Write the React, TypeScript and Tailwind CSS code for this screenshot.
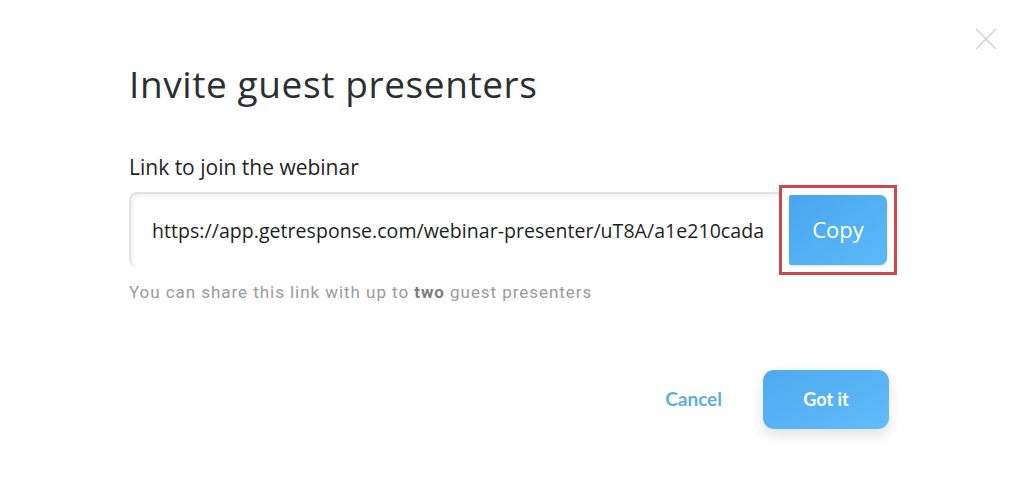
export default function App() {
  return (
    <div className="relative w-[1024px] h-[481px] bg-white overflow-hidden font-['Open_Sans',sans-serif]">
      <button className="absolute right-[26px] top-[27px] w-[24px] h-[24px] text-[#d4d4d4]">
        <svg viewBox="0 0 24 24" width="24" height="24" fill="none" stroke="currentColor" strokeWidth="1.6">
          <path d="M2 2 L22 22 M22 2 L2 22" />
        </svg>
      </button>

      <div className="pl-[129px] pt-[58px]">
        <h1 className="text-[37px] leading-[52px] text-[#2b2f33] tracking-[0.6px]">
          Invite guest presenters
        </h1>

        <div className="mt-[43px] text-[21px] leading-[28px] text-[#1f2326]">
          Link to join the webinar
        </div>

        <div className="mt-[11px] flex items-center w-[768px]">
          <div className="flex-1 h-[75px] flex items-center pl-[21px] rounded-l-[8px] border-t-2 border-l-2 border-[#e3e3e3] shadow-[inset_2px_2px_3px_rgba(0,0,0,0.06)] overflow-hidden">
            <span className="whitespace-nowrap text-[19.5px] tracking-[0.05px] text-[#1c1f22]">
              https://app.getresponse.com/webinar-presenter/uT8A/a1e210cada
            </span>
          </div>
          <div className="p-[7px] border-[3px] border-[#d2474c] -my-[8px]">
            <button className="w-[98px] h-[70px] rounded-r-[7px] rounded-l-[2px] bg-gradient-to-br from-[#49a6ee] to-[#5cb9f8] text-white text-[22px] font-normal shadow-[0_1px_3px_rgba(0,0,0,0.15)]">
              Copy
            </button>
          </div>
        </div>

        <p className="mt-[13px] text-[17px] tracking-[0.95px] text-[#9b9b9b] font-['Roboto',sans-serif]">
          You can share this link with up to <b className="font-bold text-[#7d7d7d]">two</b> guest presenters
        </p>

        <div className="mt-[64px] w-[760px] flex items-center justify-end gap-[41px] font-['Lato',sans-serif]">
          <button className="text-[19px] font-bold text-[#5eaee3]">Cancel</button>
          <button className="w-[126px] h-[59px] rounded-[11px] bg-gradient-to-br from-[#4ea9ef] to-[#60bcfa] text-white text-[18px] font-bold shadow-[0_6px_14px_rgba(0,0,0,0.12)]">
            Got it
          </button>
        </div>
      </div>
    </div>
  );
}
